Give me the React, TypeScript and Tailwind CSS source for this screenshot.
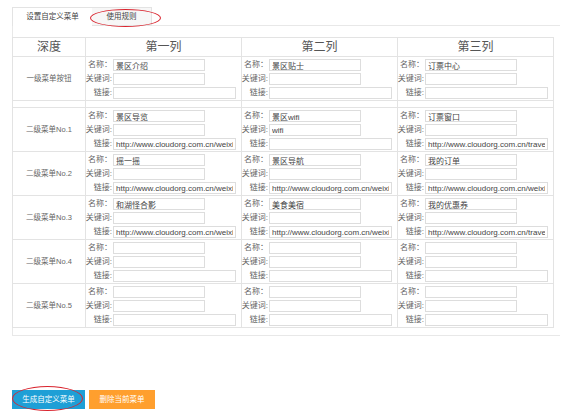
const font = { fontFamily: '"Liberation Sans", "Noto Sans CJK SC", sans-serif' }

interface Cell {
  name: string
  keyword: string
  link: string
}

interface MenuRow {
  depth: string
  cells: Cell[]
}

const empty: Cell = { name: '', keyword: '', link: '' }
const weixin = 'http://www.cloudorg.com.cn/weixin/index.html'
const travel = 'http://www.cloudorg.com.cn/travel/index.html'

const rows: MenuRow[] = [
  {
    depth: '一级菜单按钮',
    cells: [
      { name: '景区介绍', keyword: '', link: '' },
      { name: '景区贴士', keyword: '', link: '' },
      { name: '订票中心', keyword: '', link: '' },
    ],
  },
  {
    depth: '二级菜单No.1',
    cells: [
      { name: '景区导览', keyword: '', link: weixin },
      { name: '景区wifi', keyword: 'wifi', link: '' },
      { name: '订票窗口', keyword: '', link: travel },
    ],
  },
  {
    depth: '二级菜单No.2',
    cells: [
      { name: '摇一摇', keyword: '', link: weixin },
      { name: '景区导航', keyword: '', link: weixin },
      { name: '我的订单', keyword: '', link: weixin },
    ],
  },
  {
    depth: '二级菜单No.3',
    cells: [
      { name: '和湖怪合影', keyword: '', link: weixin },
      { name: '美食美宿', keyword: '', link: weixin },
      { name: '我的优惠券', keyword: '', link: travel },
    ],
  },
  { depth: '二级菜单No.4', cells: [empty, empty, empty] },
  { depth: '二级菜单No.5', cells: [empty, empty, empty] },
]

function Field({ label, value, wide }: { label: string, value: string, wide?: boolean }) {
  return (
    <div className="flex items-center h-[12px]">
      <span className="w-[25px] shrink-0 flex justify-end whitespace-nowrap text-[8px] text-[#666] leading-none pr-[1px]">
        {label}
      </span>
      <input
        readOnly
        value={value}
        className={`${wide ? 'w-[123px]' : 'w-[92px]'} h-[12px] border border-[#dddddd] bg-white px-[2px] text-[8px] leading-none text-[#444] outline-none`}
        style={font}
      />
    </div>
  )
}

function MenuCell({ cell }: { cell: Cell }) {
  return (
    <td className="border border-[#e3e3e3] align-top p-0">
      <div className="flex flex-col gap-[2px] pt-[2px] pb-[1px] pl-[2px]">
        <Field label="名称：" value={cell.name} />
        <Field label="关键词:" value={cell.keyword} />
        <Field label="链接:" value={cell.link} wide />
      </div>
    </td>
  )
}

export default function App() {
  return (
    <div className="relative w-[569px] h-[415px] bg-white pt-[7px] pl-[12px]" style={font}>
      {/* 标签页 */}
      <div className="flex h-[19px] w-[548px]">
        <div className="w-[80px] h-[19px] border-t border-l border-[#e3e3e3] bg-white flex items-center justify-center text-[7.5px] text-[#444]">
          设置自定义菜单
        </div>
        <div className="w-[60px] h-[19px] border-t border-r border-b border-[#e3e3e3] bg-[#f7f7f7] flex items-center justify-center text-[7.5px] text-[#444]">
          使用规则
        </div>
        <div className="flex-1 border-b border-[#e8e8e8]" />
      </div>

      {/* 内容面板 */}
      <div className="w-[548px] h-[310px] border-l border-b border-[#e8e8e8] pt-[11px]">
        <table className="table-fixed border-collapse w-[541px] -ml-px">
          <colgroup>
            <col className="w-[73px]" />
            <col className="w-[156px]" />
            <col className="w-[156px]" />
            <col className="w-[156px]" />
          </colgroup>
          <thead>
            <tr className="h-[19px]">
              {['深度', '第一列', '第二列', '第三列'].map(h => (
                <th
                  key={h}
                  className="border border-[#e3e3e3] p-0 text-[12px] font-normal text-[#555] leading-none"
                  style={{ fontFamily: '"Liberation Serif", "Noto Sans CJK SC", serif' }}
                >
                  {h}
                </th>
              ))}
            </tr>
          </thead>
          <tbody>
            {rows.map((row, i) => (
              <>
                <tr key={row.depth} className="h-[43px]">
                  <td className="border border-[#e3e3e3] p-0 text-center text-[7.5px] text-[#666]">{row.depth}</td>
                  {row.cells.map((c, j) => (
                    <MenuCell key={j} cell={c} />
                  ))}
                </tr>
                {i === 0 && (
                  <tr key="sep" className="h-[7px]">
                    <td className="border border-[#e3e3e3] p-0" />
                    <td className="border border-[#e3e3e3] p-0" />
                    <td className="border border-[#e3e3e3] p-0" />
                    <td className="border border-[#e3e3e3] p-0" />
                  </tr>
                )}
              </>
            ))}
          </tbody>
        </table>
      </div>

      {/* 按钮 */}
      <div className="flex gap-[4px] mt-[54px]">
        <button className="w-[73px] h-[19px] bg-[#1e9fd6] text-white text-[7.5px] leading-none">生成自定义菜单</button>
        <button className="w-[66px] h-[19px] bg-[#ff9f2e] text-white text-[7.5px] leading-none">删除当前菜单</button>
      </div>

      {/* 红色标注圈 */}
      <div className="absolute left-[90px] top-[9px] w-[71px] h-[18px] rounded-[50%] border border-[#d9232d]" />
      <div className="absolute left-[12px] top-[386px] w-[71px] h-[25px] rounded-[50%] border border-[#d9232d]" />
    </div>
  )
}
